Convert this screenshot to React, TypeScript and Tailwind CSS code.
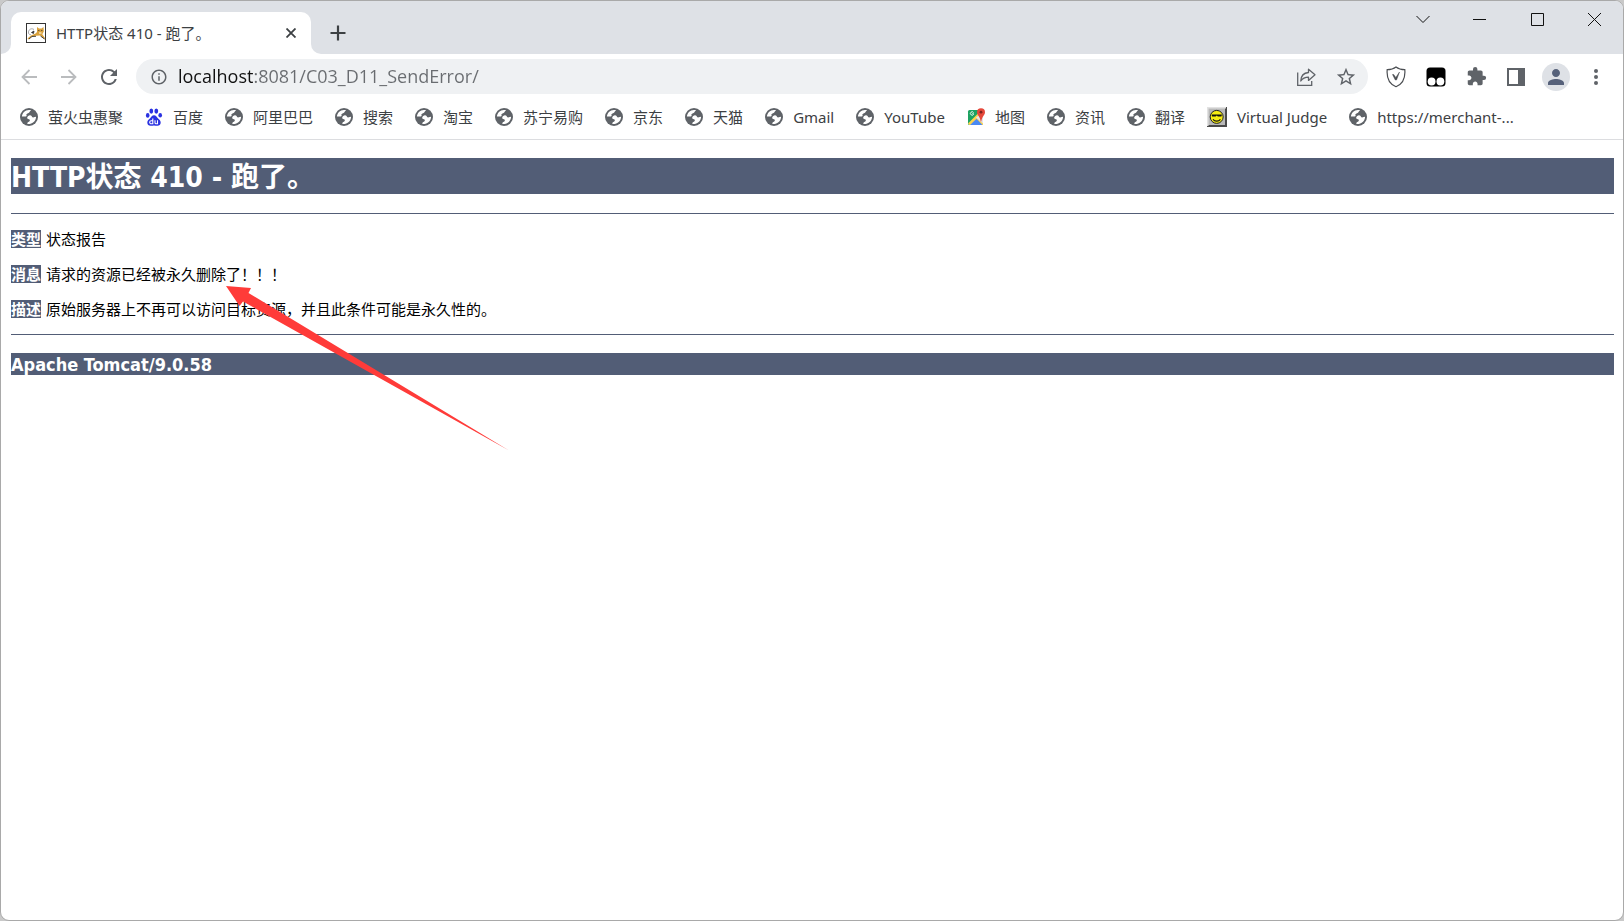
import type { ReactNode } from 'react';
import { MdExtension, MdPerson, MdRefresh, MdStarOutline, MdInfoOutline } from 'react-icons/md';

const GlobeIcon = () => (
   <svg viewBox="0 0 18 18" className="size-[18px] shrink-0">
      <circle cx="9" cy="9" r="9" fill="#5f6368" />
      <path d="M1.9 8.6C2.1 5 5 2 8.9 1.9c.9 0 1.6.1 2.2.4-.9.5-1.3 1.3-1.9 2.1-.7.9-1.9.8-2.6 1.6-.6.8.3 1.3 0 2.1-.4.8-1.5.3-2.5.4-.8 0-1.5.1-2.2.1z" fill="#fff" />
      <path d="M8.2 7.9c1.1-.8 2.7-.9 3.4.2.4.7.5 1.3 1.5 1.3 1.1 0 2-.5 3-.6-.1 3.6-2.7 6.6-6.2 7.2-1 .1-1.8 0-2.7-.2 0-1.2.8-1.7 1.7-2.1.9-.5 1.3-1.3.6-2.1-.7-.7-2.1-.4-2.3-1.6-.1-.9.3-1.6 1-2.1z" fill="#fff" />
   </svg>
);

const BaiduIcon = () => (
   <svg viewBox="0 0 18 18" className="size-[18px] shrink-0" fill="#2a32e1">
      <ellipse cx="6.3" cy="3.1" rx="1.9" ry="2.6" />
      <ellipse cx="11.3" cy="3.1" rx="1.9" ry="2.6" />
      <ellipse cx="2.7" cy="7.4" rx="1.8" ry="2.3" />
      <ellipse cx="15.2" cy="7.2" rx="1.8" ry="2.3" />
      <path d="M9 7.3c2 0 2.7 1.6 3.9 2.9 1.3 1.2 2.8 2.3 2.8 4.2 0 2.3-1.6 3.4-3.5 3.3-1.2 0-2-.3-3.2-.3s-2 .3-3.2.3c-1.9.1-3.5-1-3.5-3.3 0-1.9 1.5-3 2.8-4.2C6.3 8.9 7 7.3 9 7.3z" />
      <path d="M7.8 10.6v5.2H6.2a1.4 1.4 0 0 1 0-3h1.6M10 12.3v2.5c0 .7.3 1 1 1h1.5v-3.5" fill="none" stroke="#fff" strokeWidth="1.1" />
   </svg>
);

const MapsIcon = () => (
   <svg viewBox="0 0 18 18" className="size-[18px] shrink-0">
      <rect x="1" y="2" width="15" height="15" rx="1.5" fill="#1da261" />
      <path d="M1 15.5 14.5 2 16 3.5V17H2.5z" fill="#ffd44c" />
      <path d="M9 9.5 16 4v11.5z" fill="#e4e6e9" />
      <path d="M3 17l6.5-6.3L15.5 17z" fill="#4a89f3" />
      <path d="M6.7 5.7H5.2M6.6 4.6a1.7 1.7 0 1 0 .1 1.6" stroke="#fff" strokeWidth=".9" fill="none" />
      <path d="M14 .2a4 4 0 0 1 4 4c0 2.8-3 4-3.7 9.3h-.6C13 8.2 10 7 10 4.2a4 4 0 0 1 4-4z" fill="#e5483b" />
      <circle cx="14" cy="4.2" r="1.4" fill="#7b231e" />
   </svg>
);

const JudgeIcon = () => (
   <svg viewBox="0 0 20 20" className="size-5 shrink-0">
      <path d="M0 0h20v20H0z" fill="#4a4a4a" />
      <path d="M0 0h19v1L1 19H0z" fill="#e2e2e2" />
      <path d="M1.5 1.5h16.5v16.5H1.5z" fill="#b9b9b9" />
      <circle cx="9.7" cy="9.9" r="6.5" fill="#f6ec13" stroke="#222" strokeWidth="1" />
      <path d="M4.5 7.5h10.5l-.6 2h-3.5l-1.1-1.1-1.2 1.1H5.1z" fill="#111" />
      <path d="M6 12.3c1.8 2.4 5.6 2.4 7.4 0" fill="none" stroke="#111" strokeWidth="1.1" />
   </svg>
);

const TomcatIcon = () => (
   <svg viewBox="0 0 20 20" className="size-5 shrink-0">
      <rect x=".5" y=".5" width="19" height="19" fill="#fff" stroke="#333" />
      <path d="M8 6.5C5 4.5 2 7 2.5 10c.3 1.5 1.5 2 2.5 1.5" fill="none" stroke="#aaa" />
      <path d="M1.5 15.5 5 12.5l4.5-2L11 9V4l2 1.5h2.5L17.5 4l.3 4.5-1.5 2.8 3 4.2-1 .5-4-3.5-4.3.2L6 13.500 2.5 16.5z" fill="#d9a13b" />
      <path d="M5.5 9.5 8 8l-.5 2.5z" fill="#222" stroke="#333" strokeWidth=".8" />
      <path d="M3 16l3-2.5 4-.2M14.5 13l4 3M12.3 7.5h1M15.3 7.5h1" stroke="#333" strokeWidth=".9" fill="none" />
      <path d="M13 9.3h2.5v1.4H13z" fill="#f3e0b5" />
   </svg>
);

const bookmarks: { name: string; icon?: ReactNode }[] = [
   { name: '萤火虫惠聚' },
   { name: '百度', icon: <BaiduIcon /> },
   { name: '阿里巴巴' },
   { name: '搜索' },
   { name: '淘宝' },
   { name: '苏宁易购' },
   { name: '京东' },
   { name: '天猫' },
   { name: 'Gmail' },
   { name: 'YouTube' },
   { name: '地图', icon: <MapsIcon /> },
   { name: '资讯' },
   { name: '翻译' },
   { name: 'Virtual Judge', icon: <JudgeIcon /> },
   { name: 'https://merchant-...' },
];

const report = [
   { label: '类型', text: '状态报告' },
   { label: '消息', text: '请求的资源已经被永久删除了！！！' },
   { label: '描述', text: '原始服务器上不再可以访问目标资源，并且此条件可能是永久性的。' },
];

const TabStrip = () => (
   <header className="flex h-[53px] items-end bg-[#dee1e6]">
      <div className="size-2.5 bg-white">
         <div className="size-full rounded-br-[10px] bg-[#dee1e6]" />
      </div>
      <div className="flex h-[42px] w-[300px] items-center rounded-t-[10px] bg-white pr-2.5 pl-[15px]">
         <TomcatIcon />
         <span className="ml-2.5 flex-1 font-['Noto_Sans','Noto_Sans_CJK_SC',sans-serif] text-[15px] whitespace-nowrap text-[#3c4043]">
            HTTP状态 410 - 跑了。
         </span>
         <button aria-label="关闭标签页" className="grid size-5 place-items-center">
            <svg viewBox="0 0 10 10" className="size-2.5" stroke="#3c4043" strokeWidth="1.8">
               <path d="M.5.5l9 9M9.5.5l-9 9" />
            </svg>
         </button>
      </div>
      <div className="size-2.5 bg-white">
         <div className="size-full rounded-bl-[10px] bg-[#dee1e6]" />
      </div>
      <button aria-label="新标签页" className="grid h-[42px] w-[34px] place-items-center">
         <svg viewBox="0 0 16 16" className="size-4" stroke="#3c4043" strokeWidth="2.2">
            <path d="M8 .5v15M.5 8h15" />
         </svg>
      </button>
      <div className="ml-auto flex self-start text-[#111]">
         <button aria-label="搜索标签页" className="grid h-9 w-[54px] place-items-center">
            <svg viewBox="0 0 14 14" className="size-3.5" fill="none" stroke="currentColor">
               <path d="M.5 4 7 10.5 13.5 4" />
            </svg>
         </button>
         <button aria-label="最小化" className="grid h-9 w-[58px] place-items-center">
            <svg viewBox="0 0 13 13" className="size-[13px]" stroke="currentColor">
               <path d="M0 6.5h13" />
            </svg>
         </button>
         <button aria-label="最大化" className="grid h-9 w-[58px] place-items-center">
            <svg viewBox="0 0 13 13" className="size-[13px]" fill="none" stroke="currentColor">
               <path d="M.5.5h12v12H.5z" />
            </svg>
         </button>
         <button aria-label="关闭" className="grid h-9 w-[57px] place-items-center">
            <svg viewBox="0 0 13 13" className="size-[13px]" stroke="currentColor">
               <path d="M0 0l13 13M13 0 0 13" />
            </svg>
         </button>
      </div>
   </header>
);

const Toolbar = () => (
   <div className="flex h-[45px] items-center pr-[7px] pl-2">
      <button aria-label="后退" className="grid size-10 place-items-center">
         <svg viewBox="0 0 16 16" className="size-4" fill="none" stroke="#babcbe" strokeWidth="1.8">
            <path d="M16 8H1.5M8.5 1 1.5 8l7 7" />
         </svg>
      </button>
      <button aria-label="前进" className="grid size-10 place-items-center">
         <svg viewBox="0 0 16 16" className="size-4" fill="none" stroke="#babcbe" strokeWidth="1.8">
            <path d="M0 8h14.5M7.5 1l7 7-7 7" />
         </svg>
      </button>
      <button aria-label="重新加载" className="grid size-10 place-items-center">
         <MdRefresh className="size-6 text-[#5f6368]" />
      </button>
      <div className="ml-[7px] flex h-[35px] flex-1 items-center rounded-full bg-[#eff1f3] pr-0.5 pl-3.5 text-[#5f6368]">
         <MdInfoOutline className="size-[18px] shrink-0" />
         <input
            aria-label="地址栏"
            defaultValue="localhost:8081/C03_D11_SendError/"
            className="ml-2.5 h-[26px] min-w-0 flex-1 bg-[linear-gradient(to_right,#111_76px,#696c70_76px)] bg-clip-text text-[18px] text-transparent outline-none"
         />
         <button aria-label="分享此页面" className="grid size-10 place-items-center">
            <svg viewBox="0 0 20 20" className="size-5" fill="none" stroke="currentColor" strokeWidth="1.3">
               <path d="M1.7 5.5v12.8h14V14" />
               <path d="M12.5 2.2v3.3C7.5 5.8 5 9 4.8 14c1.7-2.6 4-3.9 7.700-3.900v3.300L19 7.800z" strokeLinejoin="round" />
            </svg>
         </button>
         <button aria-label="为此标签页添加书签" className="grid size-10 place-items-center">
            <MdStarOutline className="size-[22px]" />
         </button>
      </div>
      <div className="ml-2 flex">
         <button aria-label="安全扩展" className="grid size-10 place-items-center">
            <svg viewBox="0 0 20 22" className="h-[22px] w-5" fill="none" stroke="#4b4e52" strokeWidth="1.2">
               <path d="M10 1c2.5 2 5.5 2.7 8.8 2.7C19.5 12 17 18 10 20.7 3 18 .5 12 1.2 3.7 4.5 3.7 7.5 3 10 1z" />
               <path d="M6.5 8.5h1.2l2.1 3L13.5 6l-3 8H9.3z" fill="#4b4e52" strokeWidth=".5" />
            </svg>
         </button>
         <button aria-label="脚本管理器" className="grid size-10 place-items-center">
            <svg viewBox="0 0 20 20" className="size-5">
               <rect x=".5" y=".5" width="19" height="19" rx="3.5" fill="#000" />
               <circle cx="5.6" cy="14.5" r="3.9" fill="#fff" />
               <circle cx="14.4" cy="14.5" r="3.9" fill="#fff" />
            </svg>
         </button>
         <button aria-label="扩展程序" className="grid size-10 place-items-center">
            <MdExtension className="size-[21px] text-[#5f6368]" />
         </button>
         <button aria-label="侧边栏" className="grid size-10 place-items-center">
            <svg viewBox="0 0 18 18" className="size-[18px]">
               <path d="M0 0h18v18H0z" fill="#5f6368" />
               <path d="M2 2h9v14H2z" fill="#fff" />
            </svg>
         </button>
         <button aria-label="用户" className="grid size-10 place-items-center">
            <span className="grid size-7 place-items-center rounded-full bg-[#dee1e6]">
               <MdPerson className="size-6 text-[#56617a]" />
            </span>
         </button>
         <button aria-label="菜单" className="grid size-10 place-items-center">
            <svg viewBox="0 0 4 18" className="h-[18px] w-1" fill="#5f6368">
               <circle cx="2" cy="3" r="2" />
               <circle cx="2" cy="9" r="2" />
               <circle cx="2" cy="15" r="2" />
            </svg>
         </button>
      </div>
   </div>
);

const BookmarksBar = () => (
   <nav className="flex h-[41px] items-start gap-[22px] border-b border-[#dcdde0] pt-2 pl-[19px] font-['Noto_Sans','Noto_Sans_CJK_SC',sans-serif] text-[15px] text-[#3c4043]">
      {bookmarks.map(({ name, icon }) => (
         <a key={name} href="#" className="flex h-5 items-center gap-2.5 whitespace-nowrap">
            {icon ?? <GlobeIcon />}
            {name}
         </a>
      ))}
   </nav>
);

const App = () => {
   return (
      <div className="min-h-screen bg-[#c9c9c9] font-['Open_Sans','Noto_Sans_CJK_SC',sans-serif]">
         <div className="flex min-h-screen flex-col overflow-hidden rounded-[9px] border border-[#a9a9a9] bg-white">
            <TabStrip />
            <Toolbar />
            <BookmarksBar />
            <main className="relative flex-1 px-2.5 pt-[18px] pr-[9px] font-['Noto_Sans','Noto_Sans_CJK_SC',sans-serif] text-[15px] text-black">
               <h1 className="h-9 bg-[#525d76] font-['DejaVu_Sans_Condensed','Noto_Sans_CJK_SC',sans-serif] text-[28px] leading-10 font-bold text-white">
                  HTTP状态 410 - 跑了。
               </h1>
               <hr className="mt-[19px] border-[#525d76]" />
               <div className="my-4 space-y-[17px]">
                  {report.map(({ label, text }) => (
                     <p key={label} className="flex gap-[5px] leading-[18px]">
                        <b className="bg-[#525d76] text-white">{label}</b>
                        {text}
                     </p>
                  ))}
               </div>
               <hr className="border-[#525d76]" />
               <h3 className="mt-[18px] h-[22px] bg-[#525d76] font-['DejaVu_Sans_Condensed','Noto_Sans_CJK_SC',sans-serif] text-[18px] leading-6 font-bold text-white">
                  Apache Tomcat/9.0.58
               </h3>
               <svg viewBox="0 0 284 166" className="absolute top-[146px] left-[225px] h-[166px] w-[284px]">
                  <path d="M0 0l25 2-2.5 5L283 164.5 17 15.5 13.5 20z" fill="#ff3b39" />
               </svg>
            </main>
         </div>
      </div>
   );
};

export default App;
